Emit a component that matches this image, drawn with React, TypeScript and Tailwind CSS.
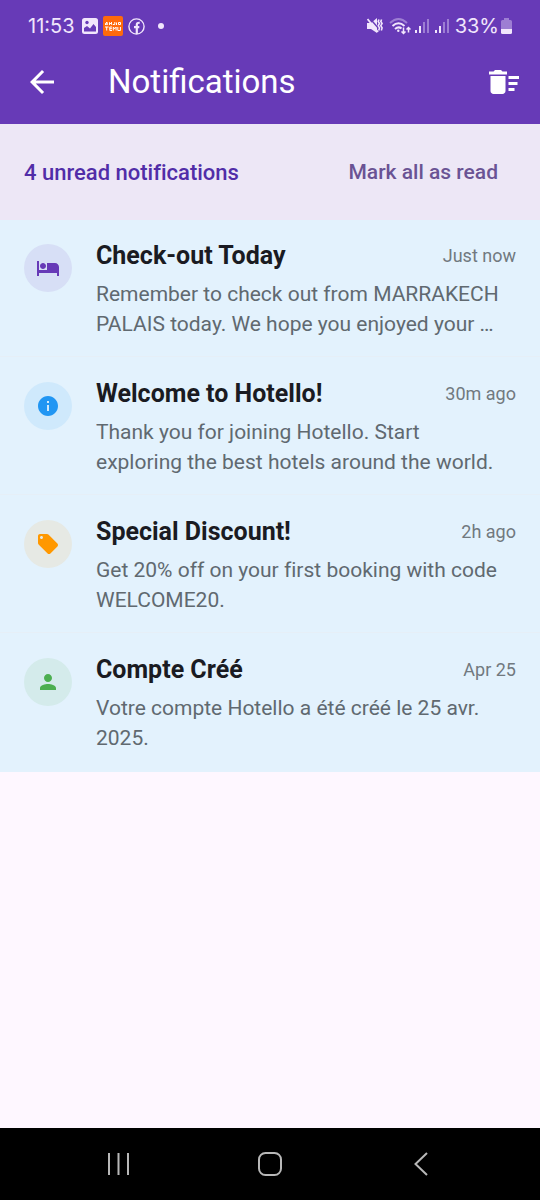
import React from "react";
import {
  MdArrowBack,
  MdDeleteSweep,
  MdHotel,
  MdInfo,
  MdLocalOffer,
  MdPerson,
} from "react-icons/md";
import type { IconType } from "react-icons";

type Notice = {
  title: string;
  time: string;
  body: string;
  Icon: IconType;
  tint: string;
};

const notices: Notice[] = [
  {
    title: "Check-out Today",
    time: "Just now",
    body: "Remember to check out from MARRAKECH PALAIS today. We hope you enjoyed your …",
    Icon: MdHotel,
    tint: "bg-[#d7dff6] text-[#673ab7]",
  },
  {
    title: "Welcome to Hotello!",
    time: "30m ago",
    body: "Thank you for joining Hotello. Start exploring the best hotels around the world.",
    Icon: MdInfo,
    tint: "bg-[#cfe9fc] text-[#2196f3]",
  },
  {
    title: "Special Discount!",
    time: "2h ago",
    body: "Get 20% off on your first booking with code WELCOME20.",
    Icon: MdLocalOffer,
    tint: "bg-[#e6e9e4] text-[#ff9800]",
  },
  {
    title: "Compte Créé",
    time: "Apr 25",
    body: "Votre compte Hotello a été créé le 25 avr. 2025.",
    Icon: MdPerson,
    tint: "bg-[#d4ebeb] text-[#4caf50]",
  },
];

function Signal() {
  return (
    <svg width="14" height="16" viewBox="0 0 14 16" fill="#f1e6fc" aria-hidden="true">
      <rect x="0" y="12" width="2" height="3" />
      <rect x="4" y="8" width="2" height="7" />
      <rect x="8" y="4" width="2" height="11" opacity=".4" />
      <rect x="12" y="1" width="2" height="14" opacity=".4" />
    </svg>
  );
}

function StatusBar() {
  return (
    <div className="flex h-[52px] items-center justify-between px-7 font-['Inter',sans-serif] text-[20px] text-[#f1e6fc]">
      <div className="flex items-center gap-[7px]">
        <span>11:53</span>
        <svg width="16" height="16" viewBox="0 0 16 16" aria-hidden="true">
          <rect width="16" height="16" rx="2.500" fill="#f1e6fc" />
          <circle cx="5" cy="4.500" r="1.700" fill="#673ab7" />
          <path d="M2 13.500V10l3-2 3 2.500L11.500 6 14 9v4.500z" fill="#673ab7" />
        </svg>
        <svg className="-mx-0.5" width="20" height="20" viewBox="0 0 20 20" aria-hidden="true">
          <rect width="20" height="20" rx="2" fill="#ff6a0c" />
          <g fill="none" stroke="#fff" strokeWidth="1">
            <path d="M2.500 9V7.500L4 6v3M2.500 8H5M6.500 9V6.500l2 2V6M9.800 8.500h2V6M13.500 6.500v2.500M17.500 6.500h-2v2h2zM2 11h3.500M3.700 11v3.500M9 11H6.800v3.500H9M6.800 12.700H9M10.300 14.500V11l1.400 1.800 1.400-1.800v3.500M14.800 11v3.500h2.600V11" />
          </g>
        </svg>
        <svg width="17" height="17" viewBox="0 0 17 17" fill="none" stroke="#f1e6fc" aria-hidden="true">
          <circle cx="8.500" cy="8.500" r="7.600" strokeWidth="1.400" />
          <path d="M8.800 16V7q0-2.500 2.900-2.200M6 9.200h5.300" strokeWidth="2.200" />
        </svg>
        <span className="ml-1.5 size-1.5 rounded-full bg-[#f1e6fc]" />
      </div>
      <div className="flex items-center gap-1.5">
        <svg width="16" height="16" viewBox="0 0 16 16" aria-hidden="true">
          <path d="M0 5h4l6-5v15l-6-4H0z" fill="#f1e6fc" />
          <path d="M2.500 0l10 11.500" stroke="#673ab7" strokeWidth="1.400" />
          <path d="M.5 1L11 14" stroke="#f1e6fc" strokeWidth="1.800" />
          <path d="M12 1.500l-.8 2 1.300 2-1.300 2.200 1.300 2.200-.8 2.600M14.600 1.500l-.8 2 1.300 2-1.300 2.200 1.300 2.200-.8 2.600" fill="none" stroke="#f1e6fc" strokeWidth="1.600" />
        </svg>
        <svg width="22" height="18" viewBox="0 0 22 18" fill="none" stroke="#f1e6fc" strokeWidth="2" aria-hidden="true">
          <path d="M1 6Q9.500-2 18 6" opacity=".4" />
          <path d="M3.500 9q6-5.500 12 0M6 12q3.500-3 6.500-.5" />
          <circle cx="9.300" cy="13.800" r="1.200" fill="#f1e6fc" stroke="none" />
          <path d="M14.500 10.500v6M12.500 14.500l2 2 2-2M19.500 15.500v-5M17.500 12.500l2-2 2 2" strokeWidth="1.500" />
        </svg>
        <div className="-ml-0.5 flex gap-1.5">
          <Signal />
          <Signal />
        </div>
        <div className="flex items-center gap-0.5">
          <span>33%</span>
          <svg width="11" height="16" viewBox="0 0 11 16" fill="#f1e6fc" aria-hidden="true">
            <path d="M3 0h5v2h1.500Q11 2 11 3.500V11H0V3.500Q0 2 1.500 2H3z" opacity=".4" />
            <path d="M0 11h11v3.500Q11 16 9.500 16h-8Q0 16 0 14.500z" />
          </svg>
        </div>
      </div>
    </div>
  );
}

function Row({ title, time, body, Icon, tint }: Notice) {
  return (
    <li className="flex gap-6 border-b border-[#e6eff7] px-6 pt-[21px] pb-[11px] first:pt-5 last:border-transparent">
      <span className={`mt-1 flex size-12 shrink-0 items-center justify-center rounded-full ${tint}`}>
        <Icon size={24} aria-hidden="true" />
      </span>
      <div className="min-w-0 flex-1">
        <div className="flex h-[31px] items-center justify-between gap-3">
          <h2 className="text-[25px] font-bold text-[#1a1b22]">{title}</h2>
          <time className="shrink-0 text-[18px] text-[#71797f]">{time}</time>
        </div>
        <p className="mt-2 mb-[3px] line-clamp-2 h-[63px] pr-3 text-[21px] leading-[30px] text-[#606970] [font-variant-ligatures:none]">
          {body}
        </p>
      </div>
    </li>
  );
}

export default function App() {
  return (
    <div className="flex min-h-screen flex-col bg-[#fef7ff] font-['Roboto',sans-serif]">
      <header className="bg-[#673ab7] text-white">
        <StatusBar />
        <div className="flex h-[72px] items-center pr-[18px] pb-3 pl-6">
          <button type="button" aria-label="Back" className="flex size-9 items-center justify-center">
            <MdArrowBack size={36} />
          </button>
          <h1 className="ml-12 flex-1 text-[33px]">Notifications</h1>
          <button type="button" aria-label="Clear notifications" className="flex size-9 items-center justify-center">
            <MdDeleteSweep size={36} />
          </button>
        </div>
      </header>
      <main className="flex-1">
        <div className="flex h-24 items-center justify-between bg-[#ede7f6] pt-px pr-[42px] pl-6 font-medium">
          <p className="text-[22px] text-[#512da8] [font-variant-ligatures:none]">4 unread notifications</p>
          <button type="button" className="text-[21px] text-[#6a5394]">Mark all as read</button>
        </div>
        <ul className="bg-[#e3f2fd] pb-px">
          {notices.map((n) => (
            <Row key={n.title} {...n} />
          ))}
        </ul>
      </main>
      <nav aria-label="System" className="grid h-[72px] grid-cols-3 items-center justify-items-center bg-black px-[8%] text-[#b8b8b8]">
        <button type="button" aria-label="Recent apps" className="flex size-12 items-center justify-center">
          <svg width="24" height="24" viewBox="0 0 24 24" stroke="currentColor" strokeWidth="2">
            <path d="M2 1v22M11.500 1v22M21 1v22" />
          </svg>
        </button>
        <button type="button" aria-label="Home" className="flex size-12 items-center justify-center">
          <svg width="24" height="24" viewBox="0 0 24 24" fill="none" stroke="currentColor" strokeWidth="2">
            <rect x="1" y="1" width="22" height="22" rx="6.500" />
          </svg>
        </button>
        <button type="button" aria-label="Back" className="flex size-12 items-center justify-center">
          <svg width="24" height="24" viewBox="0 0 24 24" fill="none" stroke="currentColor" strokeWidth="2">
            <path d="M18 1L6.500 12 18 23" />
          </svg>
        </button>
      </nav>
    </div>
  );
}
